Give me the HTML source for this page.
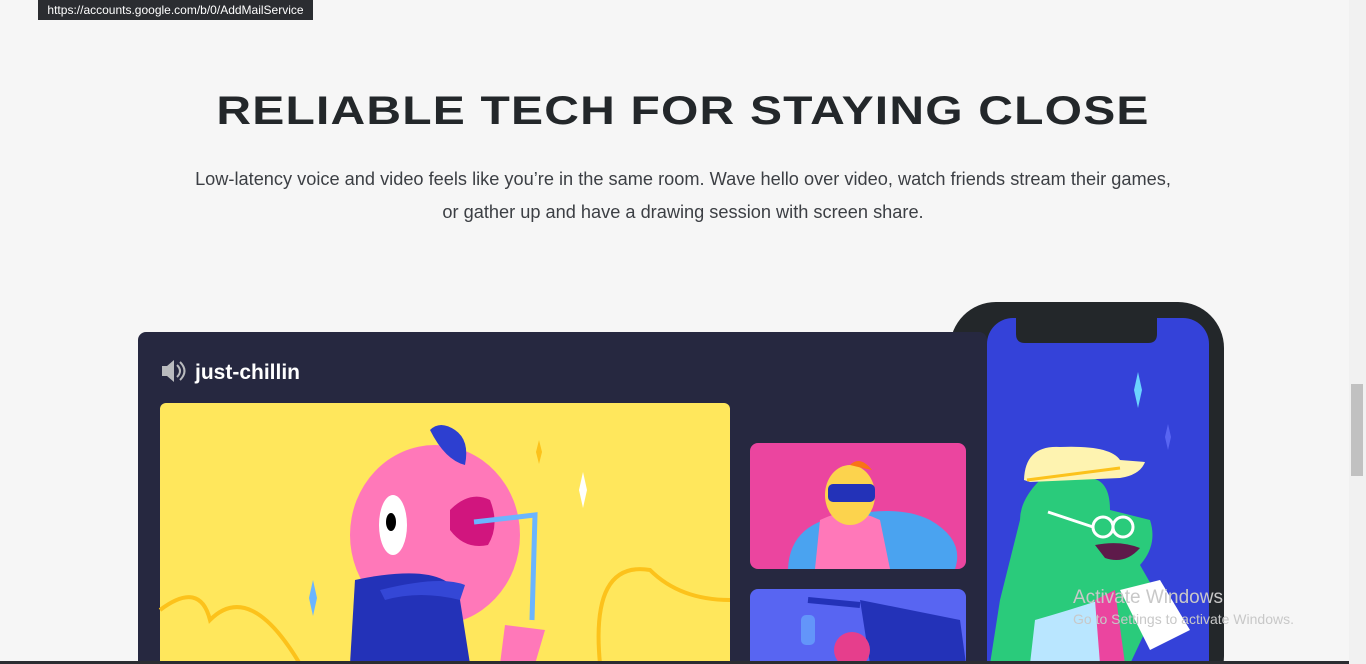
<!DOCTYPE html>
<html><head><style>
html,body{margin:0;padding:0;overflow:hidden}
body{width:1366px;height:664px;overflow:hidden;background:#f6f6f6;position:relative;font-family:"Liberation Sans",sans-serif}
.tip{position:absolute;left:38px;top:0;width:275px;height:20px;background:#2b2d31;color:#fff;font-size:12px;line-height:20px;text-align:center}
h1{position:absolute;top:89px;left:0;width:1366px;margin:0;text-align:center;font-size:40px;line-height:44px;font-weight:900;color:#23272a;letter-spacing:1px;transform:scaleX(1.2)}
.p{position:absolute;top:163px;left:0;width:1366px;text-align:center;font-size:18.2px;line-height:33px;color:#3c3f44}
.sb{position:absolute;right:0;top:0;width:17px;height:664px;background:#f1f1f1}
.th{position:absolute;left:1351px;top:384px;width:12px;height:92px;background:#c1c1c1}
</style></head><body>
<div class="tip">https://accounts.google.com/b/0/AddMailService</div>
<h1>RELIABLE TECH FOR STAYING CLOSE</h1>
<div class="p">Low-latency voice and video feels like you’re in the same room. Wave hello over video, watch friends stream their games,<br>or gather up and have a drawing session with screen share.</div>
<svg width="1366" height="664" style="position:absolute;left:0;top:0;overflow:hidden">
<rect x="950" y="302" width="274" height="400" rx="46" fill="#23272a"/>
<rect x="987" y="318" width="222" height="380" rx="26" fill="#3442d9"/>
<path d="M1016 318 H1157 V334 Q1157 343 1148 343 H1025 Q1016 343 1016 334 Z" fill="#23272a"/>
<rect x="138" y="332" width="849" height="360" rx="8" fill="#262840"/>
<path d="M162 366h5l7-6v22l-7-6h-5z" fill="#b9bbbe"/>
<path d="M177 365q6 6 0 12M180 362q9 9 0 18" stroke="#b9bbbe" stroke-width="2" fill="none"/>
<text x="195" y="379" fill="#fff" font-size="21" font-weight="bold" font-family="Liberation Sans, sans-serif">just-chillin</text>
<rect x="160" y="403" width="570" height="280" rx="6" fill="#ffe75c"/>
<rect x="750" y="443" width="216" height="126" rx="8" fill="#eb459f"/>
<rect x="750" y="589" width="216" height="100" rx="8" fill="#5865f2"/>
<path d="M160 610 Q200 580 210 620 Q250 580 300 664" stroke="#fcc21b" stroke-width="4" fill="none"/>
<path d="M600 664 Q590 560 650 570 Q680 600 730 600" stroke="#fcc21b" stroke-width="4" fill="none"/>
<ellipse cx="435" cy="535" rx="85" ry="90" fill="#ff78b9"/>
<path d="M355 580 Q450 560 460 600 L470 664 H350 Z" fill="#2332b8"/>
<path d="M380 590 Q440 575 465 585 L460 600 Q420 590 385 600Z" fill="#3447d6"/>
<path d="M430 430 q10 -10 25 0 q15 10 10 35 q-20 -5 -35 -35z" fill="#2d3fd0"/>
<ellipse cx="393" cy="525" rx="14" ry="30" fill="#fff"/>
<ellipse cx="391" cy="522" rx="5" ry="9" fill="#000"/>
<path d="M450 510 Q470 490 490 500 Q500 525 488 545 Q465 550 450 530Z" fill="#d1157e"/>
<path d="M474 522 L535 515 L532 620" stroke="#6bb5ff" stroke-width="5" fill="none"/>
<path d="M505 625 l40 5 l-10 34 h-35z" fill="#ff78b9"/>
<path d="M583 472l4 18 l-4 18 l-4-18z" fill="#fff"/>
<path d="M539 440l3 12 l-3 12 l-3-12z" fill="#fcc21b"/>
<path d="M313 580l4 18 l-4 18 l-4-18z" fill="#6bb5ff"/>
<path d="M788 569 Q790 520 850 515 Q900 505 930 520 Q965 540 955 569Z" fill="#4aa3f0"/>
<path d="M815 569 L820 520 Q850 505 880 520 L890 569Z" fill="#ff78b9"/>
<ellipse cx="850" cy="495" rx="25" ry="30" fill="#fcd34d"/>
<rect x="828" y="484" width="47" height="18" rx="5" fill="#2332b8"/>
<path d="M850 465 q10 -10 22 5 q-10 -2 -22 -5" fill="#f97316"/>
<path d="M860 600 L960 620 L966 664 H870Z" fill="#2332b8"/>
<rect x="801" y="615" width="14" height="30" rx="5" fill="#6bb5ff" opacity=".6"/>
<path d="M808 600 L860 605" stroke="#2332b8" stroke-width="6"/>
<circle cx="852" cy="650" r="18" fill="#e63e8c"/>
<path d="M1138 372l4 18 l-4 18 l-4-18z" fill="#6bd3ff"/>
<path d="M1168 424l3 13 l-3 13 l-3-13z" fill="#5865f2"/>
<path d="M1020 520 Q1020 500 1040 480 L1090 478 Q1110 480 1110 510 L1150 520 Q1158 545 1140 565 L1160 600 L1130 664 H990 L1000 600 Z" fill="#2acb7b"/>
<path d="M1024 480 Q1025 445 1060 447 Q1110 445 1120 460 L1145 462 Q1140 475 1120 478 L1030 482Z" fill="#fef3b0"/>
<path d="M1027 480 L1120 468" stroke="#fcc21b" stroke-width="3"/>
<circle cx="1103" cy="527" r="10" stroke="#fff" stroke-width="3" fill="none"/>
<circle cx="1123" cy="527" r="10" stroke="#fff" stroke-width="3" fill="none"/>
<path d="M1093 527 L1048 512" stroke="#fff" stroke-width="3"/>
<path d="M1095 545 Q1120 540 1140 548 Q1125 565 1105 558Z" fill="#5e1a4a"/>
<path d="M1035 620 Q1070 610 1100 600 L1100 664 H1030Z" fill="#b9e6ff"/>
<path d="M1095 600 L1115 590 L1125 664 H1100Z" fill="#eb459f"/>
<path d="M1120 590 L1160 580 L1190 630 L1150 650Z" fill="#fff"/>
<text x="1073" y="603" fill="#c8c8c8" font-size="19" font-family="Liberation Sans, sans-serif">Activate Windows</text>
<text x="1073" y="624" fill="#c8c8c8" font-size="14" font-family="Liberation Sans, sans-serif">Go to Settings to activate Windows.</text>
<rect x="0" y="661" width="1349" height="3" fill="#2b2d31"/>
</svg>
<div class="sb"></div><div class="th"></div>
</body></html>
